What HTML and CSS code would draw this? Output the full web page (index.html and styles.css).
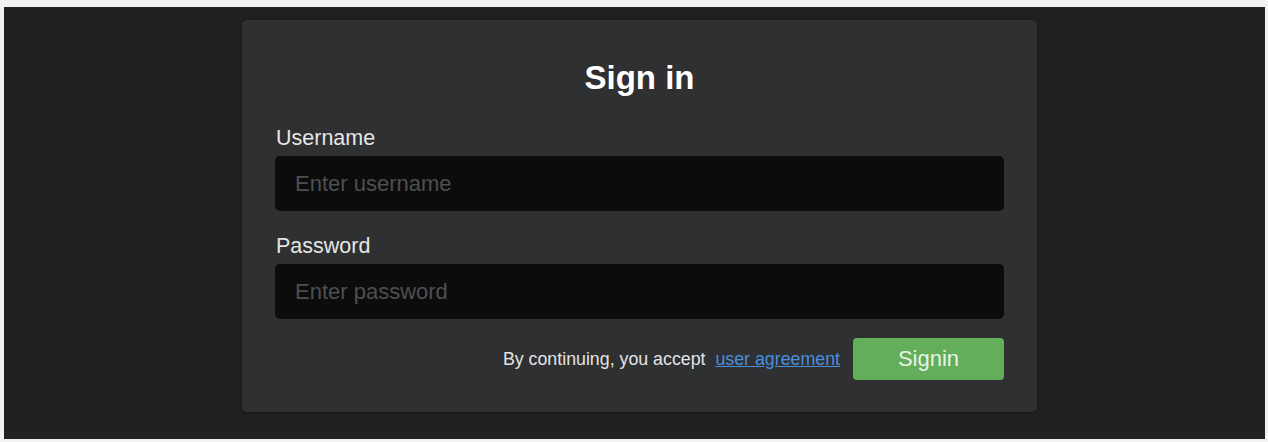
FILE: index.html
```html
<!DOCTYPE html>
<html lang="en">
<head>
<meta charset="utf-8">
<title>Sign in</title>
<link rel="stylesheet" href="styles.css">
</head>
<body>
<div class="frame">
  <main class="stage">
    <form class="card">
      <h1 class="title">Sign in</h1>
      <label class="field">
        <span class="label">Username</span>
        <input class="input" type="text" placeholder="Enter username">
      </label>
      <label class="field">
        <span class="label">Password</span>
        <input class="input" type="password" placeholder="Enter password">
      </label>
      <div class="actions">
        <span class="terms">By continuing, you accept <a class="link" href="#">user agreement</a></span>
        <button class="btn" type="button">Signin</button>
      </div>
    </form>
  </main>
</div>
</body>
</html>
```

FILE: styles.css
```css
* { box-sizing: border-box; }

html, body {
  margin: 0;
  height: 100%;
}

body {
  background: #f2f2f2;
  font-family: "Liberation Sans", Arial, sans-serif;
}

.frame {
  padding: 7px 3px 3px 4px;
  height: 442px;
}

.stage {
  background: #202122;
  height: 432px;
  padding: 13px 0 0 238px;
}

.card {
  width: 795px;
  height: 392px;
  background: #2f3032;
  border-radius: 5px;
  box-shadow: 0 1px 4px rgba(0, 0, 0, 0.35);
  padding: 0 33px;
  display: flex;
  flex-direction: column;
}

.title {
  margin: 40px 0 0;
  height: 36px;
  line-height: 36px;
  text-align: center;
  color: #ffffff;
  font-size: 33px;
  font-weight: 700;
}

.field {
  display: flex;
  flex-direction: column;
}

.label {
  color: #e6e6e6;
  font-size: 21.5px;
  line-height: 26px;
  margin: 0 0 5px 1px;
}

.field:first-of-type .label { margin-top: 29px; }
.field + .field .label { margin-top: 22px; }

.input {
  height: 55px;
  border: none;
  border-radius: 5px;
  background: #0c0c0d;
  color: #dddddd;
  font-family: inherit;
  font-size: 22px;
  padding: 0 20px;
  outline: none;
}

.input::placeholder { color: #4e4f51; }

.actions {
  margin-top: 19px;
  display: flex;
  justify-content: flex-end;
  align-items: center;
  gap: 13px;
}

.terms {
  color: #e4e4e4;
  font-size: 17.8px;
}

.link {
  color: #4a8fdc;
  text-decoration: underline;
  margin-left: 5px;
}

.btn {
  width: 151px;
  height: 42px;
  border: none;
  border-radius: 4px;
  background: #62ae5a;
  color: #e8f3e6;
  font-family: inherit;
  font-size: 22px;
  cursor: pointer;
}
```
